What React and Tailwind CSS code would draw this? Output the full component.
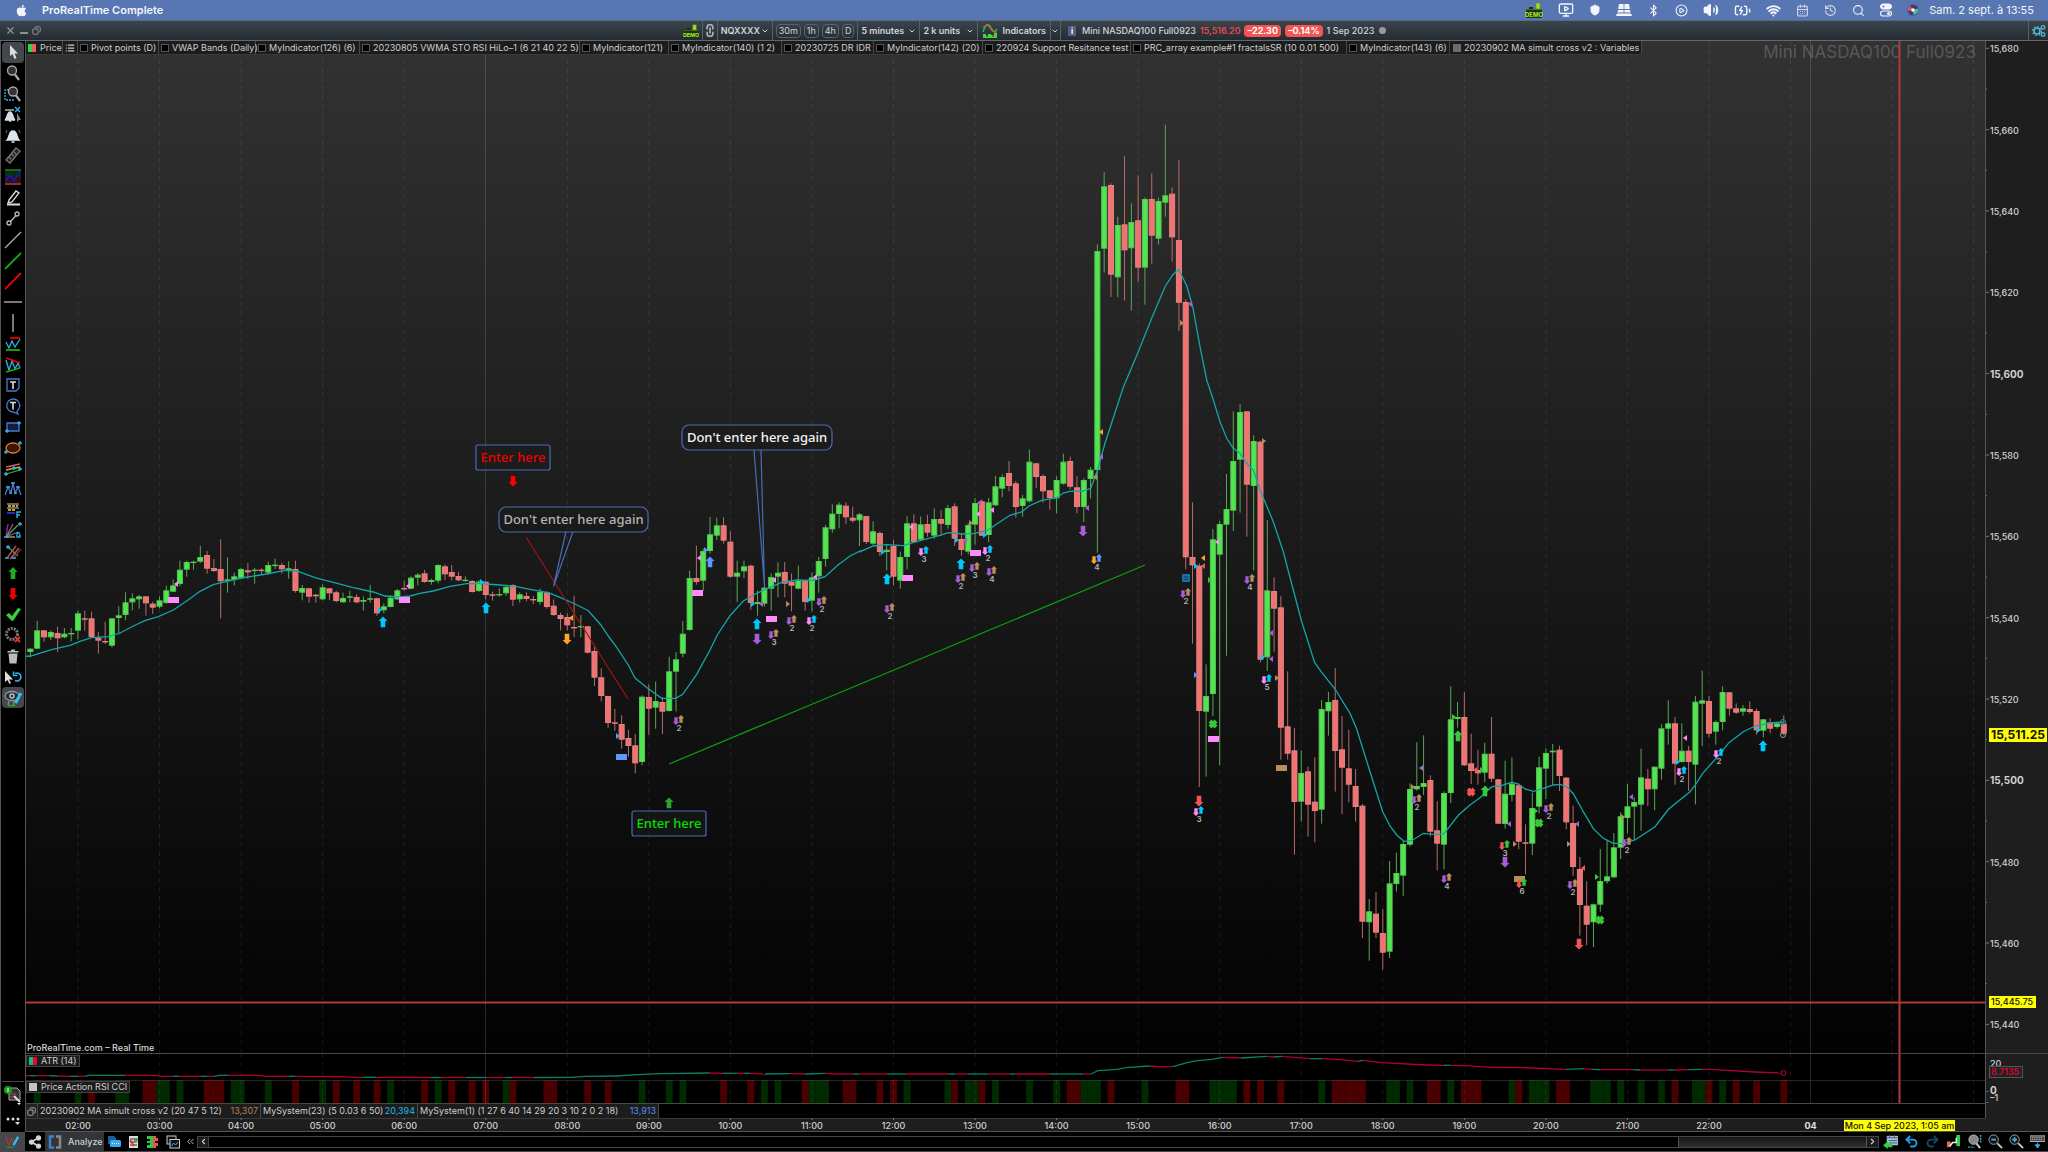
import {
  Bluetooth, CirclePlay, Volume2, BatteryCharging, Wifi, History, Search, MonitorPlay,
  Shield, CalendarDays, ChevronDown, ChevronLeft, ChevronRight, Undo2, Redo2, Share2,
  ChevronsLeft, X, Copy, List, Link2,
} from "lucide-react";
import { FaApple } from "react-icons/fa";

const STEP = 6.796;
const barX = (i) => 30.4 + i * STEP;

// [origin, "dir high open/close close/open low ..."], offsets in thirds of a pixel
const CANDLES = [
  [360, "g865 866 876 892,g783 811 866 866,r811 811 832 845,g811 816 832 840,r800 819 835 876,g804 821 832 835,g804 819 822 844,g752 760 812 838,r752 775 778 812,r755 775 831 833,r816 833 842 881,r785 843 846 852,g775 775 857 862,g739 766 774 823,g697 727 765 780,g700 715 727 751,g705 709 718 746,r708 709 730 767,r725 731 743 762,g709 721 740 745,g677 691 729 732,g658 676 695 696,g602 629 672 679,g602 606 629 650,g602 605 608 629,g557 591 605 609,r573 585 626 641,r597 624 633 636,r538 627 664 775,g592 658 661 698,g638 649 660 676,g624 627 655 658,r609 631 637 658,g624 629 632 671,r625 629 632 643,g605 615 638 644,g596 614 617 627,r608 615 628 641,g604 625 631 656,r602 627 693 698,g675 684 698 721,r684 685 710 728,r702 704 709 728,g673 682 718 721,r684 685 700 720,r692 697 723 727,g698 714 727 728,g692 709 712 727,r703 711 727 730,g709 720 725 752,g675 715 719 728,r713 715 760 767,g730 739 751 760,g706 713 741 742,g687 691 718 720,r662 684 688 692,g649 653 686 688,g639 644 653 676,r630 640 666 668,g656 660 666 674,g613 615 662 670,r613 619 643 660,r615 636 650 661,r635 648 661 664,g649 659 662 665,r660 663 696 698,g660 665 693 696,r664 665 705 718"],
  [400, "r575 583 587 602,g565 582 585 590,g554 561 580 587,r553 555 599 618,g577 583 598 608,r577 588 597 604,r588 597 601 612,g566 576 606 614,r574 577 621 626,r598 617 645 648,r638 645 657 691,r640 651 676 691,r587 681 685 711,g645 678 682 712,r678 679 758 760,r741 753 833 858,r805 832 888 904,r887 888 969 984,r927 967 971 992,r946 972 1019 1046,r989 1014 1038 1070,r1003 1036 1090 1120,g886 890 1086 1096,r853 891 926 1005,g845 903 923 986,r892 906 935 1002,g770 814 933 935,g756 778 815 934,g663 701 761 772,g512 534 690 692,r437 534 546 554,g446 453 542 573,g351 403 453 461,g353 376 407 420,r352 376 422 431,r394 425 530 534,g482 518 530 606,g482 499 514 534,r494 497 609 629,g572 606 612 647,g558 563 611 620,g520 531 566 632,g487 518 530 592,r486 516 551 592,r520 545 557 634,g497 541 566 568,r541 541 606 632,g517 532 602 634,g471 483 529 578,g375 382 477 500,g313 341 388 398,g307 314 342 385,r307 317 352 372,r320 353 362 368,g339 343 361 438,r348 348 426 432,g364 394 431 435,r394 399 456 468,g433 449 456 511,r420 438 530 556"],
  [420, "g395 411 482 506,g289 310 411 448,r283 310 366 369,g290 313 359 362,r284 312 338 350,g265 297 347 356,r270 297 311 347,g255 264 315 326,r250 259 356 378,r340 357 390 407,g310 315 395 403,g234 249 314 374,r238 244 347 348,g234 247 345 366,g168 199 256 258,g163 171 206 232,r123 159 198 214,r183 190 261 293,g225 235 258 290,g89 125 244 248,r129 130 171 204,r163 168 214 248,r210 211 234 269,g169 180 235 280,g101 125 191 194,r110 123 200 208,r168 202 261 280,g175 180 261 306,g141 149 177 235"],
  [100, "g433 453 1110 1358,g216 259 446 518,r250 255 524 591,g350 375 532 592,r168 373 451 602,g310 366 445 632,r226 361 503 547,g292 297 503 614,r220 297 407 491,g293 303 416 434,g74 286 308 350,r262 281 412 485,r180 420 608 693,r598 606 1372 1408,r1207 1371 1396 1631,r1390 1397 1833 2061,g1693 1788 1835 2030,g1287 1318 1782 1848,g1263 1272 1364 1996,g1122 1227 1274 1667,g934 1083 1232 1293,g912 936 1079 1238,r934 934 1154 1310,g1006 1023 1158 1411,r1022 1025 1679 1687,g1260 1471 1672 1713"],
  [540, "r112 153 206 335,r168 202 563 659,r394 559 641 659,r564 631 786 944,g631 699 785 845,r680 694 794 890,r652 785 813 907,g480 507 809 851,g456 486 514 587,r384 480 633 755,r528 628 683 822,r569 685 734 787,r687 738 801 845,r792 797 1145 1194,g1077 1114 1147 1262,r1056 1121 1178 1194,r1107 1179 1238 1289,g963 1030 1235 1254,g938 999 1032 1055,g904 912 1007 1068,g730 747 914 920,g607 738 748 752,g586 729 741 765,r706 720 875 890,r784 871 911 991,g754 759 914 988,g439 538 759 789,g486 531 537 563,r456 531 676 678"],
  [640, "r281 370 393 432,r329 390 400 434,g308 341 398 427,r231 341 416 426,r417 418 551 552,g362 461 552 566,g352 431 465 484,r430 436 605 628,r553 607 611 703,g458 504 611 645,g350 382 500 521,g325 339 386 477,g312 332 337 436,r317 329 408 453,r411 413 547 568,r497 549 681 708,r651 687 795 887,r724 797 854 916,g791 793 847 921,g627 723 794 815,g599 709 724 731,g579 622 712 714,g517 529 623 657,g432 499 534 580,g472 486 500 600,g326 412 494 572,r387 416 448 498,g380 380 448 511,g253 265 386 419,g181 250 266 314,r231 250 371 434,g250 332 366 368,r318 332 366 453,g168 185 374 493,g92 181 191 318,r168 183 281 292,g241 246 275 314,g139 156 246 271,r156 157 206 227,r190 205 218 222,g195 205 215 227,r184 207 216 221,r206 213 271 284,g237 238 272 292,r235 247 266 280,g245 250 261 266,r226 251 281 286"],
];

const candles = CANDLES.flatMap(([origin, rows]) =>
  rows.split(",").map((row) => ({ up: row[0] === "g", y: row.slice(1).split(" ").map((v) => origin + v / 3) }))
);

// moving average, same units: [x origin, y origin, points]
const MA = [
  [0, 360, "76,889 92,888 125,878 155,869 210,856 240,844 275,833 325,830 360,819 400,798 435,782 475,770 520,750 560,723 600,694 640,674 665,668 724,654 800,642 855,631 890,633 945,653 1000,667 1060,683 1120,696 1155,708 1200,711 1230,708 1260,700 1300,693 1350,679 1400,671 1450,670"],
  [480, 400, "18,552 60,555 110,560 150,568 205,578 240,592 285,612 325,632 362,674 385,708 410,742 445,795 465,834 505,866 545,895 587,895 608,883 650,823 690,750 712,705 750,647 790,603 830,580 870,562 905,547 950,540 1000,541 1035,530 1075,494 1110,468 1140,453"],
  [860, 420, "0,395 40,378 80,374 130,377 180,362 240,346 265,338 310,342 345,340 385,330 410,312 450,286 485,276 508,257 545,241 590,233 610,219 630,214 670,213"],
  [1040, 100, "152,1165 172,1112 195,1030 250,862 295,755 335,655 375,560 398,525 416,508 440,557 458,620 480,740 500,840 520,900 540,965 560,1015 580,1045 600,1060 620,1090 640,1110 662,1175 700,1265 730,1355"],
  [1140, 540, "440,75 485,245 524,368 545,397 585,447 630,520 650,567 690,695 728,815 750,858 770,885 792,904 815,902 850,880 890,884 912,881 955,826 990,795 1020,773"],
  [1400, 640, "275,440 300,438 335,427 355,432 375,447 400,454 430,445 460,435 480,433 500,440 520,461 550,515 580,566 610,595 640,610 670,610 705,600 765,560 806,507 870,455 885,436 908,400 950,353 987,308 1030,275 1065,258 1110,249 1150,246"],
];

const maPoints = MA.map(([ox, oy, pts]) =>
  pts.split(" ").map((p) => {
    const [x, y] = p.split(",");
    return `${(ox + x / 3).toFixed(1)},${(oy + y / 3).toFixed(1)}`;
  }).join(" ")
).join(" ");

const C = {
  cyan: "#00c8ff", pink: "#ff8cff", purple: "#a85cd8", tan: "#b98d5e", blue: "#6096ff",
  orange: "#ffa726", red: "#f25555", pure: "#ff0000", green: "#38c83c", forest: "#2ba52f",
};

const ARROWS = [
  ["up", 383, 622, "cyan"], ["up", 486, 608, "cyan"], ["down", 513, 481, "pure"], ["down", 567, 639, "orange"],
  ["up", 710, 562, "blue"], ["up", 757, 624, "cyan"], ["down", 757, 639, "purple"], ["up", 669, 803, "forest"],
  ["up", 887, 579, "cyan"], ["up", 961, 564, "cyan"], ["down", 1083, 531, "purple"], ["down", 1199, 801, "red"],
  ["up", 1458, 736, "green"], ["up", 1485, 791, "green"], ["down", 1505, 862, "purple"], ["down", 1579, 944, "red"],
  ["up", 1763, 746, "cyan"],
];

const BLOCKS = [
  [173, 600, "pink"], [404, 600, "pink"], [621, 757, "blue"], [697, 593, "pink"], [771, 619, "pink"],
  [907, 578, "pink"], [975, 553, "pink"], [1213, 739, "pink"], [1281, 768, "tan"], [1519, 879, "tan"],
];

const PAIRS = [
  [679, 720, "purple", "tan", 2], [774, 634, "purple", "tan", 3], [792, 620, "purple", "tan", 2], [812, 620, "pink", "cyan", 2],
  [822, 601, "purple", "tan", 2], [890, 608, "purple", "tan", 2], [924, 551, "pink", "cyan", 3], [961, 578, "purple", "tan", 2],
  [975, 567, "purple", "tan", 3], [988, 550, "pink", "cyan", 2], [992, 571, "purple", "tan", 4], [1097, 559, "orange", "blue", 4],
  [1186, 593, "purple", "tan", 2], [1250, 579, "purple", "tan", 4], [1199, 811, "pink", "cyan", 3], [1267, 679, "pink", "cyan", 5],
  [1417, 799, "purple", "tan", 2], [1447, 878, "purple", "tan", 4], [1505, 845, "red", "green", 3], [1522, 883, "red", "green", 6],
  [1549, 808, "purple", "tan", 2], [1573, 884, "purple", "tan", 2], [1627, 842, "purple", "tan", 2], [1682, 771, "pink", "cyan", 2],
  [1719, 753, "pink", "cyan", 2],
];

const CROSSES = [[1213, 724, "green"], [1471, 792, "red"], [1539, 823, "green"], [1600, 920, "green"]];

const FLAGS = [
  ["l", 176, 584, "pink"], ["r", 380, 610, "cyan"], ["l", 408, 586, "pink"], ["r", 482, 582, "cyan"], ["l", 571, 618, "orange"],
  ["r", 618, 736, "blue"], ["l", 699, 558, "pink"], ["r", 706, 550, "blue"], ["r", 753, 604, "cyan"], ["l", 761, 604, "purple"],
  ["l", 774, 580, "pink"], ["r", 788, 604, "tan"], ["r", 809, 600, "cyan"], ["l", 815, 577, "pink"], ["r", 883, 552, "cyan"],
  ["l", 911, 527, "pink"], ["l", 965, 540, "purple"], ["r", 957, 540, "cyan"], ["r", 971, 523, "tan"], ["l", 979, 503, "purple"],
  ["l", 978, 514, "pink"], ["l", 992, 510, "pink"], ["r", 985, 535, "cyan"], ["l", 1087, 508, "purple"], ["l", 1101, 432, "orange"],
  ["l", 1101, 457, "purple"], ["l", 1095, 477, "tan"], ["l", 1190, 304, "purple"], ["r", 1182, 323, "tan"], ["r", 1264, 441, "tan"],
  ["l", 1203, 558, "orange"], ["r", 1196, 566, "cyan"], ["l", 1203, 566, "red"], ["r", 1210, 580, "green"], ["l", 1217, 542, "pink"],
  ["l", 1271, 633, "purple"], ["r", 1263, 657, "cyan"], ["l", 1271, 659, "purple"], ["r", 1277, 678, "tan"], ["r", 1196, 675, "blue"],
  ["l", 1421, 768, "purple"], ["r", 1413, 787, "tan"], ["r", 1454, 717, "green"], ["l", 1475, 770, "red"], ["r", 1482, 770, "green"],
  ["l", 1509, 824, "purple"], ["r", 1515, 844, "tan"], ["r", 1536, 811, "green"], ["l", 1577, 824, "purple"], ["r", 1569, 844, "tan"],
  ["l", 1583, 868, "red"], ["r", 1597, 877, "green"], ["l", 1631, 797, "purple"], ["r", 1623, 817, "tan"], ["l", 1685, 738, "pink"],
  ["r", 1678, 762, "cyan"], ["r", 1759, 730, "cyan"],
];

// RSI CCI states by bar index
const RSI_UP = [1, 7, 13, 14, 19, 20, 22, 30, 31, 35, 43, 53, 60, 70, 90, 94, 96, 108, 110, 115, 116, 117, 129, 135, 138, 139, 142, 147, 151, 155, 156, 157, 164, 174, 175, 176, 177, 190, 200, 201, 203, 209, 218, 221, 222, 223, 230, 231, 232, 234, 237, 240, 245, 246, 249];
const RSI_DOWN = [9, 17, 18, 26, 27, 28, 39, 45, 48, 51, 58, 62, 65, 67, 71, 76, 77, 82, 85, 102, 106, 114, 120, 121, 125, 127, 136, 140, 153, 154, 159, 169, 170, 179, 181, 184, 192, 193, 194, 195, 196, 206, 207, 211, 212, 213, 219, 225, 226, 242, 247, 251, 254, 258];

// ATR: [x, y, colour of the segment that ends here]
const ATR = [
  [26, 1075.7], [30, 1075.7, "r"], [36, 1075.7, "g"], [49, 1075.7, "r"], [57, 1076, "g"], [70, 1076.3, "r"], [78, 1076.3, "g"], [85, 1076.3, "r"],
  [89, 1075.3, "g"], [125, 1075.3, "g"], [152, 1075.3, "r"], [163, 1076.3, "r"], [173, 1076.3, "r"], [179, 1076.3, "g"], [201, 1076.3, "r"],
  [207, 1076.3, "g"], [214, 1076.3, "r"], [219, 1075.3, "g"], [228, 1075.3, "g"], [257, 1075.3, "r"], [268, 1076.3, "r"], [289, 1076.3, "r"],
  [295, 1076.3, "g"], [344, 1076.7, "r"], [353, 1077.3, "r"], [363, 1077.3, "r"], [376, 1077.3, "g"], [431, 1077.5, "r"], [441, 1077.5, "g"],
  [466, 1077.5, "r"], [486, 1077.5, "g"], [505, 1077.5, "r"], [512, 1077.5, "g"], [534, 1077.5, "r"], [571, 1077.3, "g"], [585, 1076.3, "g"],
  [616, 1076, "g"], [638, 1074.7, "g"], [661, 1073.7, "g"], [709, 1073, "g"], [723, 1073.3, "r"], [737, 1073.3, "g"], [744, 1073.3, "r"],
  [750, 1073.3, "g"], [765, 1074, "r"], [790, 1073.7, "g"], [805, 1074, "r"], [825, 1073.3, "g"], [837, 1074, "r"], [853, 1074, "r"],
  [859, 1074, "g"], [887, 1074, "r"], [906, 1074, "g"], [948, 1074, "r"], [955, 1074, "g"], [968, 1074, "r"], [988, 1074, "g"], [1010, 1074, "r"],
  [1015, 1074, "g"], [1050, 1074, "r"], [1064, 1074, "g"], [1083, 1074, "g"], [1091, 1074, "r"], [1098, 1070.7, "g"], [1117, 1069.3, "g"],
  [1126, 1067.7, "g"], [1150, 1066, "g"], [1158, 1066.7, "r"], [1173, 1066.7, "r"], [1187, 1062.7, "g"], [1197, 1060.7, "g"], [1210, 1059.7, "g"],
  [1223, 1057.3, "g"], [1241, 1058, "r"], [1267, 1056.3, "g"], [1274, 1057, "r"], [1282, 1056.3, "g"], [1310, 1058.7, "r"], [1322, 1058.7, "g"],
  [1336, 1059.3, "r"], [1358, 1061.3, "r"], [1363, 1060.3, "g"], [1382, 1062.7, "r"], [1426, 1065, "r"], [1444, 1065.3, "r"], [1450, 1065.3, "g"],
  [1465, 1065.7, "r"], [1492, 1067.3, "r"], [1522, 1067.7, "r"], [1566, 1069.3, "r"], [1584, 1068.7, "g"], [1592, 1069.3, "r"], [1600, 1069.7, "g"],
  [1633, 1069.7, "r"], [1640, 1070, "g"], [1668, 1070, "r"], [1674, 1070, "g"], [1688, 1069.7, "r"], [1702, 1069.3, "g"], [1711, 1069.3, "r"],
  [1755, 1072, "r"], [1781, 1073, "r"],
];

const HOURS = Array.from({ length: 21 }, (_, n) => ({ x: 78 + n * 81.55, label: `${String(n + 2).padStart(2, "0")}:00` }));
const DASHED = [...HOURS.filter((h) => h.label !== "07:00").map((h) => h.x), 1790.5, 1892, 1973.5];

function Guides({ top, height }) {
  return (
    <g>
      {DASHED.map((x) => (
        <line key={x} x1={x} x2={x} y1={top} y2={top + height} stroke="#ffffff" strokeOpacity="0.08" strokeDasharray="5 4" />
      ))}
      {[485.5, 1810.5].map((x) => (
        <line key={x} x1={x} x2={x} y1={top} y2={top + height} stroke="#ffffff" strokeOpacity="0.14" />
      ))}
      <line x1="1899.5" x2="1899.5" y1={top} y2={top + height} stroke="#b03a3a" strokeWidth="2" />
    </g>
  );
}

const ARROW_UP = "M0-5.5L4.500-1H2.300V5.200H-2.300V-1H-4.500Z";
const ARROW_DOWN = "M0 5.500L4.500 1H2.300V-5.200H-2.300V1H-4.500Z";

function Arrow({ dir, x, y, color, scale = 1 }) {
  return <path d={dir === "up" ? ARROW_UP : ARROW_DOWN} fill={C[color]} transform={`translate(${x} ${y}) scale(${scale})`} />;
}

function Note({ x, y, width, radius, color, children }) {
  return (
    <g>
      <rect x={x} y={y} width={width} height="25" rx={radius} fill="#1a1a1a" fillOpacity="0.6" stroke="#4a6cb4" strokeWidth="1.2" />
      <text x={x + width / 2} y={y + 17} textAnchor="middle" fill={color} className="font-['Noto_Sans','Open_Sans',sans-serif] text-[13px] font-medium">{children}</text>
    </g>
  );
}

function PriceChart() {
  const prices = Array.from({ length: 13 }, (_, n) => 15680 - n * 20);
  return (
    <svg viewBox="26 41 2022 1012" preserveAspectRatio="none" className="block h-full w-full">
      <defs>
        <linearGradient id="sky" x1="0" y1="0" x2="0" y2="1">
          <stop offset="0" stopColor="#323232" />
          <stop offset="1" stopColor="#020202" />
        </linearGradient>
      </defs>
      <rect x="26" y="41" width="1960" height="1012" fill="url(#sky)" />
      <text x="1976" y="58" textAnchor="end" fill="#585858" className="text-[17px]">Mini NASDAQ100 Full0923</text>
      <Guides top={41} height={1012} />

      {candles.map(({ up, y: [high, top, bottom, low] }, i) => (
        <g key={i}>
          <line x1={barX(i)} x2={barX(i)} y1={high} y2={low} stroke={up ? "#58a852" : "#b86a6a"} />
          <rect x={barX(i) - 2.5} y={top + 0.5} width="5" height={Math.max(0.4, bottom - top - 1)} fill={up ? "#50e650" : "#f27272"} stroke={up ? "#5ac455" : "#e08480"} />
        </g>
      ))}
      <polyline points={maPoints} fill="none" stroke="#12a6a8" strokeWidth="1.3" />
      <circle cx="1783" cy="722" r="2.5" fill="none" stroke="#12a6a8" />
      <circle cx="1783" cy="735" r="2.5" fill="none" stroke="#999" />

      <line x1="526" y1="537" x2="628" y2="699" stroke="#a01414" strokeWidth="1.2" />
      <line x1="669" y1="764" x2="1145" y2="565" stroke="#0c9c0c" strokeWidth="1.3" />

      {FLAGS.map(([dir, x, y, color], i) => (
        <path key={i} d={dir === "l" ? "M-2 0L2-3V3Z" : "M2 0L-2-3V3Z"} fill={C[color]} transform={`translate(${x} ${y})`} />
      ))}
      {BLOCKS.map(([x, y, color], i) => (
        <rect key={i} x={x - 5} y={y - 3} width="11" height="6" fill={C[color]} />
      ))}
      {CROSSES.map(([x, y, color], i) => (
        <path key={i} d="M-3-3L3 3M3-3L-3 3" stroke={C[color]} strokeWidth="4" transform={`translate(${x} ${y})`} />
      ))}
      {ARROWS.map(([dir, x, y, color], i) => <Arrow key={i} dir={dir} x={x} y={y} color={color} />)}
      {PAIRS.map(([x, y, left, right, count], i) => (
        <g key={i}>
          <Arrow dir="down" x={x - 3} y={y + 1} color={left} scale={0.72} />
          <Arrow dir="up" x={x + 2} y={y - 1} color={right} scale={0.72} />
          <text x={x} y={y + 11} textAnchor="middle" fill="#b4b4b4" className="text-[8px] font-semibold">{count}</text>
        </g>
      ))}
      <rect x="1182" y="574" width="8" height="8" rx="1" fill="#1d6fa8" />
      <path d="M1183.5 577h5M1183.5 579.5h5" stroke="#0b3d66" />

      <path d="M566 531.5L553.5 586.5L573 531.5" fill="none" stroke="#4a6cb4" strokeWidth="1.2" />
      <path d="M754 450L764.5 586.5L761 450" fill="none" stroke="#4a6cb4" strokeWidth="1.2" />
      <Note x={476} y={445} width={74} radius="2" color="#f00000">Enter here</Note>
      <Note x={499} y={507} width={149} radius="7" color="#b4b4b4">Don't enter here again</Note>
      <Note x={682} y={425} width={150} radius="7" color="#f4f4f4">Don't enter here again</Note>
      <Note x={632} y={811} width={74} radius="2" color="#00e000">Enter here</Note>

      <rect x="26" y="1001.5" width="1960" height="2" fill="#b03a3a" />
      <text x="27" y="1051" fill="#d8d8d8" className="text-[9px] font-medium">ProRealTime.com – Real Time</text>

      <rect x="1986" y="41" width="62" height="1012" fill="#1e1e1e" />
      <line x1="1985.5" x2="1985.5" y1="41" y2="1053" stroke="#555" />
      {prices.map((p) => {
        const y = 48.3 + (15680 - p) * 4.067;
        return (
          <g key={p}>
            <path d={`M1986 ${y}h3M1986 ${y + 40.7}h1`} stroke="#777" />
            <text x="1990" y={y + 4} fill="#d0d0d0" className={p % 100 ? "text-[9px] font-medium" : "text-[10px] font-bold"}>{p.toLocaleString("en-US")}</text>
          </g>
        );
      })}
      <rect x="1989" y="728" width="58" height="14" fill="#ffff00" />
      <text x="2018" y="739" textAnchor="middle" fill="#111" className="text-[12px] font-bold">15,511.25</text>
      <rect x="1989" y="996" width="47" height="12" fill="#ffff00" />
      <text x="1991" y="1005" fill="#111" className="text-[9px] font-medium">15,445.75</text>
    </svg>
  );
}

function AtrPanel() {
  return (
    <svg viewBox="26 1053 2022 27" preserveAspectRatio="none" className="block h-full w-full">
      <rect x="26" y="1053" width="1960" height="27" fill="#000" />
      <Guides top={1053} height={27} />
      {ATR.slice(1).map(([x, y, c], i) => (
        <line key={i} x1={ATR[i][0]} y1={ATR[i][1]} x2={x} y2={y} stroke={c === "g" ? "#0a8262" : "#b0002c"} strokeWidth="1.3" />
      ))}
      <circle cx="1783.5" cy="1073" r="2.5" fill="none" stroke="#d00030" />
      <rect x="1986" y="1053" width="62" height="27" fill="#1e1e1e" />
      <path d="M26 1053.5H2048" stroke="#484848" />
      <path d="M1985.5 1053V1080" stroke="#555" />
      <text x="1990" y="1067" fill="#d0d0d0" className="text-[9px] font-medium">20</text>
      <rect x="1989.5" y="1066.5" width="33" height="11" fill="#222" stroke="#555" />
      <text x="1991" y="1075" fill="#f00030" className="text-[9px] font-medium">8.7135</text>
    </svg>
  );
}

function RsiPanel() {
  return (
    <svg viewBox="26 1080 2022 24" preserveAspectRatio="none" className="block h-full w-full">
      <rect x="26" y="1080" width="1960" height="24" fill="#000" />
      {RSI_UP.map((i) => <rect key={i} x={barX(i) - 3.4} y="1080" width="6.9" height="23" fill="#002a00" />)}
      {RSI_DOWN.map((i) => <rect key={i} x={barX(i) - 3.4} y="1080" width="6.9" height="23" fill="#4a0000" />)}
      <Guides top={1080} height={24} />
      <rect x="1986" y="1080" width="62" height="24" fill="#1e1e1e" />
      <path d="M26 1080H1986M26 1103.5H1986" stroke="#484848" />
      <path d="M1985.5 1080V1104M1986 1091.5h3M1986 1102.5h3" stroke="#555" />
      <text x="1990" y="1094" fill="#d0d0d0" className="text-[10px] font-bold">0</text>
      <text x="1990" y="1101" fill="#d0d0d0" className="text-[9px] font-medium">–1</text>
    </svg>
  );
}

function TimeAxis() {
  return (
    <svg viewBox="26 1118 2022 14" preserveAspectRatio="none" className="block h-full w-full">
      <rect x="26" y="1118" width="2022" height="14" fill="#1e1e1e" />
      <path d="M26 1118H1986M26 1131.5H2048" stroke="#555" />
      {HOURS.map(({ x, label }) => (
        <g key={label}>
          <path d={`M${x} 1118v2`} stroke="#777" />
          <text x={x} y="1129" textAnchor="middle" fill="#d0d0d0" className="text-[9px] font-medium">{label}</text>
        </g>
      ))}
      <text x="1810.5" y="1129" textAnchor="middle" fill="#e0e0e0" className="text-[9px] font-bold">04</text>
      <rect x="1844" y="1120" width="111" height="11" fill="#ffff00" />
      <text x="1899.5" y="1129" textAnchor="middle" fill="#111" className="text-[9px] font-medium">Mon 4 Sep 2023, 1:05 am</text>
    </svg>
  );
}

function DemoIcon({ className }) {
  return (
    <svg viewBox="0 0 18 18" className={className}>
      <rect x="1" y="8" width="16" height="9" fill="#1f3310" />
      <path d="M4 8V6h4v2z" fill="#222" />
      <path d="M11 2h4v6h-4z" fill="#9be22d" stroke="#5c8a1b" strokeWidth="0.6" />
      <path d="M1 8.500h16" stroke="#4c6b1d" />
      <text x="9" y="15.5" textAnchor="middle" fill="#a6f02d" className="text-[6px] font-bold">DEMO</text>
    </svg>
  );
}

function MenuBar() {
  return (
    <header className="flex h-5 shrink-0 items-center bg-[#5876b2] text-[#f2f5fb]">
      <FaApple className="ml-[15px] h-[13px] w-[13px]" />
      <h1 className="ml-[14px] text-[11px] font-semibold">ProRealTime Complete</h1>
      <div className="ml-auto flex items-center gap-[10px] pr-[14px]">
        <div className="flex items-center gap-[15px]">
          <DemoIcon className="h-[18px] w-[18px]" />
          <MonitorPlay className="h-4 w-4" />
          <Shield className="h-3 w-3" fill="currentColor" />
          <svg viewBox="0 0 16 12" className="h-3 w-4" fill="currentColor">
            <path d="M3 0h4.600v5H2.200zM8.400 0H13l.8 5H8.400zM2 6h5.600v2.500H1.500zM8.400 6H14l.5 2.500H8.400zM1 9.500h14L16 12H0z" />
          </svg>
          <Bluetooth className="h-[13px] w-[13px]" />
          <CirclePlay className="h-[13px] w-[13px]" />
          <Volume2 className="h-4 w-4" fill="currentColor" />
          <BatteryCharging className="h-[17px] w-[17px]" />
          <Wifi className="h-[15px] w-[15px]" strokeWidth={3} />
          <CalendarDays className="h-[13px] w-[13px] opacity-80" />
          <History className="h-[13px] w-[13px] opacity-80" />
          <Search className="h-[13px] w-[13px]" />
          <svg viewBox="0 0 12 14" className="h-[14px] w-3" fill="none" stroke="currentColor">
            <rect x="0.500" y="1" width="11" height="5" rx="2.500" fill="currentColor" />
            <rect x="0.500" y="8" width="11" height="5" rx="2.500" strokeWidth="1.200" />
            <circle cx="3.500" cy="3.500" r="1" fill="#5876b2" stroke="none" />
            <circle cx="8.500" cy="10.500" r="1.500" fill="currentColor" stroke="none" />
          </svg>
          <svg viewBox="0 0 12 12" className="h-3 w-3">
            <circle cx="6" cy="6" r="5.500" fill="#4a3b6b" />
            <path d="M6 6L3 1.800A5.200 5.200 0 0 0 1 7z" fill="#e2507c" />
            <path d="M6 6l5-1.500A5.200 5.200 0 0 1 6.500 11z" fill="#3cc5a6" />
            <circle cx="6" cy="6" r="1.800" fill="#fff" />
          </svg>
        </div>
        <time className="text-[11px]">Sam. 2 sept. à 13:55</time>
      </div>
    </header>
  );
}

function Dropdown({ label, value, className }) {
  return (
    <div className={`flex h-full items-center border-r border-[#556068] px-[3px] ${className}`}>
      <select aria-label={label} className="appearance-none bg-transparent text-[9px] font-semibold outline-none">
        <option>{value}</option>
      </select>
      <ChevronDown className="ml-auto h-2 w-2 shrink-0" strokeWidth={3} />
    </div>
  );
}

function Toolbar() {
  return (
    <div className="grid h-[21px] shrink-0 grid-cols-[1fr_auto_1fr] items-center border-t border-b border-[#5a6a76] bg-linear-to-b from-[#3c454d] to-[#242b31] text-[9px] text-[#d0d4d7]">
      <div className="flex items-center gap-1 pl-[5px] text-[#8f979d]">
        <button aria-label="Close"><X className="h-[11px] w-[11px]" strokeWidth={2.500} /></button>
        <button aria-label="Minimize" className="mt-[5px] h-[2px] w-2 bg-[#8a9299]" />
        <button aria-label="Restore"><Copy className="h-[9px] w-[9px] -scale-x-100" strokeWidth={2.500} /></button>
      </div>
      <div className="ml-[21px] flex h-full items-center">
        <div className="flex h-full w-5 items-center border-r border-[#556068]"><DemoIcon className="h-4 w-4" /></div>
        <button aria-label="Link" className="flex h-full w-[15px] items-center justify-center border-r border-[#556068] text-[#a8adb0]"><Link2 className="h-[15px] w-[15px] rotate-90" strokeWidth={3} /></button>
        <Dropdown label="Instrument" value="NQXXXX" className="w-[55px]" />
        <div className="flex h-full items-center gap-[3px] border-r border-[#556068] px-[3px]">
          {["30m", "1h", "4h", "D"].map((t) => (
            <button key={t} className="h-[14px] rounded-sm border border-[#59636b] px-[2px] leading-3">{t}</button>
          ))}
        </div>
        <Dropdown label="Timeframe" value="5 minutes" className="w-[62px]" />
        <Dropdown label="Units" value="2 k units" className="w-[58px]" />
        <button className="flex h-full items-center gap-1 border-r border-[#556068] px-1 font-semibold">
          <svg viewBox="0 0 16 16" className="h-4 w-4">
            <path d="M1 9C4 0 6 0 9 5s4 4 6 1" fill="none" stroke="#28b43c" strokeWidth="1.600" />
            <path d="M1 5c3-4 6-3 8 1s4 3 6 3" fill="none" stroke="#e05050" strokeWidth="1.200" />
            <path d="M1 15v-4h3v2h2v-2h3v1h3v-2h3v5z" fill="#2ee03c" />
            <path d="M4 13h2M10 13h2" stroke="#e02020" strokeWidth="1.500" />
          </svg>
          Indicators
        </button>
        <button aria-label="Indicator list" className="flex h-full w-[10px] items-center justify-center border-r border-[#556068]"><ChevronDown className="h-2 w-2" strokeWidth={3} /></button>
        <span className="ml-[7px] flex h-[10px] w-2 items-center justify-center bg-[#555d80] text-[8px] font-bold text-white">i</span>
        <span className="ml-[6px] font-medium">Mini NASDAQ100 Full0923</span>
        <span className="ml-1 font-medium text-[#ff4b4b]">15,516.20</span>
        <span className="ml-1 rounded-sm bg-[#f55454] px-[3px] leading-3 font-bold text-white">–22.30</span>
        <span className="ml-1 rounded-sm bg-[#f55454] px-[3px] leading-3 font-bold text-white">–0.14%</span>
        <span className="ml-1 font-medium">1 Sep 2023</span>
        <span className="ml-[5px] h-[7px] w-[7px] rounded-full bg-[#999]" />
      </div>
      <div className="flex h-full justify-end">
        <button aria-label="Settings" className="flex h-full w-5 items-center justify-center border-l border-[#556068]">
          <svg viewBox="0 0 14 14" className="h-[14px] w-[14px]" fill="none" stroke="#58b8dc">
            <circle cx="5" cy="7" r="3" strokeWidth="1.600" />
            <circle cx="5" cy="7" r="4.500" strokeWidth="1.200" strokeDasharray="1.500 2" />
            <circle cx="11" cy="3.500" r="1.800" strokeWidth="1.300" />
            <circle cx="11" cy="10.500" r="1.800" strokeWidth="1.300" />
          </svg>
        </button>
      </div>
    </div>
  );
}

const TOOLS = [
  ["Pointer", <path d="M6 2v11l2.500-2 2 5 2-1-2-4.500H14z" fill="#ddd" />],
  ["Zoom", <g stroke="#aaa"><circle cx="8" cy="6.500" r="4.500" fill="#333" /><path d="M11 10.500l4 5.500" strokeWidth="2.200" /></g>],
  ["Zoom area", <g stroke="#aaa"><path d="M5 5H1v10h9" fill="none" stroke="#2ab4e6" strokeDasharray="2 1" /><circle cx="9" cy="6.500" r="4.500" fill="#333" /><path d="M12 10.500l4 5.500" strokeWidth="2.200" /></g>],
  ["Price alert", <g><path d="M1 14c2-1 2-8 5-8s3 7 5 8zM5 15h2" fill="#d5dde8" stroke="#d5dde8" /><path d="M1 4h9" stroke="#ccc" /><path d="M11 1l5 5M16 1l-5 5" stroke="#2ab4e6" /><path d="M13 7v9l2-2 2 0z" fill="#889" /></g>],
  ["Alert", <g><path d="M3 13c2.500-2 1.500-9 6-9s3.500 7 6 9zM7.500 15h3" fill="#e0e6f0" stroke="#e0e6f0" /><path d="M2 6l1-3M16 6l-1-3" stroke="#555" /></g>],
  ["Ruler", <g fill="none" stroke="#777"><path d="M2 13L12 1l4 3L6 16z" fill="#222" /><path d="M5 10l2 2M7 7l3 2M10 5l2 2" /></g>],
  ["Zones", <g><path d="M1 3h16v6H1z" fill="#06300a" /><path d="M1 9h16v6H1z" fill="#35100c" /><path d="M1 2h16" stroke="#2a9c2a" /><path d="M1 16h16" stroke="#d25050" /><path d="M2 13l4-6 4 6 6-10" fill="none" stroke="#1414f0" strokeWidth="1.400" /></g>],
  ["Draw", <g fill="none" stroke="#ddd"><path d="M5 11l7-9 3 2-7 9-4 1z" /><path d="M3 15.500h13" strokeWidth="2" /></g>],
  ["Segment", <g fill="none" stroke="#bbb"><circle cx="5" cy="13" r="2" /><circle cx="13" cy="4" r="2" /><path d="M6.500 11.500L12 5.500" /></g>],
  ["Line", <path d="M1 17L17 1" stroke="#aaa" />],
  ["Green line", <path d="M1 17L17 1" stroke="#18a818" strokeWidth="1.800" />],
  ["Red line", <path d="M1 17L17 1" stroke="#f00000" strokeWidth="1.800" />],
  ["Horizontal line", <path d="M0 9h18" stroke="#bbb" />],
  ["Vertical line", <path d="M9 0v18" stroke="#bbb" />],
  ["Breakout", <g fill="none"><path d="M2 7l3 6 3-7 3 6 5-8" stroke="#2ab4e6" /><path d="M6 3h10" stroke="#f00000" strokeWidth="1.800" /><path d="M2 15h14" stroke="#10b010" strokeWidth="1.800" /></g>],
  ["Channel", <g fill="none"><path d="M2 4l3 10 3-9 3 8 3-6 2 5" stroke="#2ab4e6" /><path d="M2 2l14 5" stroke="#f00000" strokeWidth="1.800" /><path d="M2 16l14-4" stroke="#10b010" strokeWidth="1.800" /></g>],
  ["Text note", <g><path d="M3 3h12v9l-3 3H3z" fill="none" stroke="#4a78d0" strokeWidth="1.300" /><path d="M6 6h6M9 6v7" stroke="#ddd" strokeWidth="1.600" /></g>],
  ["Callout", <g><path d="M13 15l1 2-5-2a6.500 6.500 0 1 1 5-2z" fill="none" stroke="#4a78d0" strokeWidth="1.300" /><path d="M6 5.500h6M9 5.500v7" stroke="#ddd" strokeWidth="1.600" /></g>],
  ["Rectangle", <g><path d="M3 5h12v8H3z" fill="#131c38" stroke="#4a78d0" /><path d="M1 13h4M3 11v4M13 5h4M15 3v4" stroke="#2ab4e6" /></g>],
  ["Ellipse", <g><ellipse cx="9" cy="9" rx="7" ry="5" fill="#3a1606" stroke="#e07830" /><path d="M0 13h4M2 11v4M14 4h4M16 2v4" stroke="#2ab4e6" /></g>],
  ["Regression", <g><path d="M2 7l14-3" stroke="#d06060" /><path d="M2 10l14-3" stroke="#e0a040" /><path d="M2 14l14-4" stroke="#30b030" /><path d="M0 14h4M2 12v4M8 8h4M10 6v4M14 9h4M16 7v4" stroke="#2ab4e6" /></g>],
  ["Pattern", <g><path d="M1 15L4 7l3 6 2-10 2 10 3-6 3 8" fill="none" stroke="#4a78d0" strokeWidth="1.300" /><path d="M2 7h4M7 3h4M12 7h4M5 13h3M10 13h3" stroke="#2ab4e6" /></g>],
  ["Fibonacci", <g><path d="M3 3h12M3 7h12" stroke="#888" /><path d="M4 5h10M4 9h8" stroke="#d0a020" strokeWidth="2" strokeDasharray="3 1" /><path d="M3 12h8" stroke="#2030d0" strokeWidth="2" /><path d="M13 17v-6h4M13 14h3" fill="none" stroke="#2ab4e6" strokeWidth="1.400" /></g>],
  ["Gann", <g><path d="M2 15L4 2" stroke="#8030c0" /><path d="M2 15L9 2" stroke="#c05070" /><path d="M2 15L14 3" stroke="#50b050" /><path d="M2 15l12-5" stroke="#5070d0" /><path d="M2 15h9" stroke="#e0a040" /><path d="M16 11h-3v4h3v-2h-1M0 15h4M14 2h4M16 0v4" fill="none" stroke="#2ab4e6" /></g>],
  ["Pitchfork", <g><path d="M4 4l10 9" stroke="#30b030" /><path d="M3 15L12 3M6 16l9-11" stroke="#c05060" /><path d="M8 16l9-10" stroke="#803030" /><path d="M2 4h4M4 2v4M1 15h4M8 15h4" stroke="#2ab4e6" /></g>],
  ["Buy arrow", <path d="M9 3l4.500 5h-2.200v7H6.700V8H4.500z" fill="#18b018" />],
  ["Sell arrow", <path d="M9 15l4.500-5h-2.200V3H6.700v7H4.500z" fill="#f00000" />],
  ["Validate", <path d="M2 10l3-2 3 3 6-8 3 1-8 12H8z" fill="#38d038" />],
  ["Wheel off", <g fill="none"><circle cx="8" cy="8" r="5.500" stroke="#777" strokeWidth="3" strokeDasharray="2 1" /><path d="M11 11l5 5M16 11l-5 5" stroke="#e03030" strokeWidth="2" /></g>],
  ["Delete", <path d="M3.500 4h11v1.500h-11zM7 2.500h4V4H7zM4.500 6.500h9l-1 10H5.500z" fill="#b8bcc0" />],
  ["Undo selection", <g><path d="M1 3v11l2.500-2 2 4 1.500-1-2-3.500H9z" fill="#ddd" /><path d="M11 5.500a4 4 0 1 1 0 7M9.500 3.500v4h4" fill="none" stroke="#2ab4e6" strokeWidth="1.600" /></g>],
  ["Show drawings", <g><ellipse cx="8" cy="7" rx="7" ry="4.500" fill="#2a2e32" stroke="#8a98a4" strokeWidth="1.300" /><circle cx="8" cy="7" r="2" fill="none" stroke="#b0bcc8" strokeWidth="1.500" /><path d="M5 12l-1 4M10 12v4" stroke="#888" /><path d="M4 16.500h7" stroke="#20b020" /><path d="M11.500 14L17 4" stroke="#30c0f0" strokeWidth="3" /></g>],
];

function Sidebar() {
  return (
    <aside className="flex w-[26px] shrink-0 flex-col border-r border-l border-[#555] bg-black px-px">
      <div className="grid h-[667px] auto-rows-fr pt-px">
        {TOOLS.map(([name, icon], i) => (
          <button key={name} aria-label={name} className={`flex items-center justify-center rounded-sm ${i === 0 || i === TOOLS.length - 1 ? "bg-[#44484c]" : ""}`}>
            <svg viewBox="0 0 18 18" className="h-[18px] w-[18px]" strokeWidth="1.300">{icon}</svg>
          </button>
        ))}
      </div>
      <div className="mt-auto flex h-[51px] flex-col items-center justify-between border-t border-[#484848] pt-[3px] pb-[6px]">
        <button aria-label="Reports">
          <svg viewBox="0 0 18 20" className="h-5 w-[18px]">
            <path d="M5 3h8l3 3v9H5z" fill="#333" stroke="#aaa" />
            <path d="M6 9h6M6 12h4" stroke="#c04040" />
            <path d="M10 11l6 6" stroke="#ddd" strokeWidth="2" />
            <circle cx="4" cy="5" r="4" fill="#18a018" />
            <path d="M4 3v4" stroke="#fff" />
            <path d="M13 18h4l-2 2z" fill="#eee" />
          </svg>
        </button>
        <button aria-label="More tools">
          <svg viewBox="0 0 16 10" className="h-[10px] w-4" fill="#ddd">
            <circle cx="3" cy="3" r="1.500" /><circle cx="8" cy="3" r="1.500" /><circle cx="13" cy="3" r="1.500" />
            <path d="M10 6h5l-2.500 3z" />
          </svg>
        </button>
      </div>
    </aside>
  );
}

const INDICATORS = [
  ["Pivot points (D)", "w-[81px]"], ["VWAP Bands (Daily)", "w-[97px]"], ["MyIndicator(126) (6)", "w-[104px]"],
  ["20230805 VWMA STO RSI HiLo–1 (6 21 40 22 5)", "w-[220px]"], ["MyIndicator(121)", "w-[89px]"], ["MyIndicator(140) (1 2)", "w-[113px]"],
  ["20230725 DR IDR", "w-[92px]"], ["MyIndicator(142) (20)", "w-[109px]"], ["220924 Support Resitance test", "w-[148px]"],
  ["PRC_array example#1 fractalsSR (10 0.01 500)", "w-[216px]"], ["MyIndicator(143) (6)", "w-[103px]"],
];

function IndicatorChips() {
  return (
    <div className="absolute top-0 left-0 flex h-[14px] border-b border-[#3a3a3a] bg-[#1c1c1c] text-[9px] leading-[13px] whitespace-nowrap text-[#cfcfcf]">
      <span className="flex w-[37px] items-center gap-1 border-r border-[#484848] pl-[2px]">
        <span className="flex h-2 w-2 shrink-0"><span className="w-1 bg-[#3ccc50]" /><span className="w-1 bg-[#e86060]" /></span>
        Price
      </span>
      <button aria-label="Price list" className="flex w-[15px] items-center justify-center border-r border-[#484848]"><List className="h-[10px] w-[10px]" strokeWidth={3} /></button>
      {INDICATORS.map(([name, width]) => (
        <label key={name} className={`flex items-center gap-[3px] border-r border-[#484848] pl-[2px] ${width}`}>
          <input type="checkbox" className="h-2 w-2 shrink-0 appearance-none border border-[#555] bg-black" />
          {name}
        </label>
      ))}
      <label className="flex w-[192px] items-center gap-[3px] border-r border-[#484848] pl-[3px]">
        <input type="checkbox" className="h-2 w-2 shrink-0 appearance-none bg-[#6c6c6c]" />
        20230902 MA simult cross v2 : Variables
      </label>
    </div>
  );
}

const SYSTEMS = [
  ["20230902 MA simult cross v2 (20 47 5 12)", "13,307", "text-[#b48250]", "w-[223px]"],
  ["MySystem(23) (5 0.03 6 50)", "20,394", "text-[#22b8e8]", "w-[157px]"],
  ["MySystem(1) (1 27 6 40 14 29 20 3 10 2 0 2 18)", "13,913", "text-[#5a8ef0]", "w-[241px]"],
];

function SystemRow() {
  return (
    <div className="flex h-[14px] shrink-0 bg-black text-[9px] leading-[14px] whitespace-nowrap text-[#cfcfcf]">
      <button aria-label="Systems" className="flex w-3 items-center justify-center border-r border-[#484848] bg-[#222] text-[#aaa]"><Copy className="h-[9px] w-[9px] -scale-x-100" strokeWidth={2.500} /></button>
      {SYSTEMS.map(([name, gain, color, width]) => (
        <span key={name} className={`flex justify-between border-r border-[#484848] bg-[#1c1c1c] px-[2px] ${width}`}>
          {name}<span className={color}>{gain}</span>
        </span>
      ))}
      <span className="ml-auto w-[63px] border-l border-[#555] bg-[#1e1e1e]" />
    </div>
  );
}

function BottomBar() {
  return (
    <footer className="flex h-5 shrink-0 items-center border-b border-[#484848] bg-black text-[9px] text-[#d0d0d0]">
      <button aria-label="Drawing tools" className="flex h-full w-[25px] items-center justify-center bg-[#44484c]">
        <svg viewBox="0 0 16 16" className="h-[15px] w-[15px]" fill="none">
          <path d="M1 3l3 9 3-7 2 6" stroke="#d03030" /><path d="M2 14h7" stroke="#20b020" /><path d="M9 12l5-9" stroke="#30c0f0" strokeWidth="2.600" />
        </svg>
      </button>
      <button aria-label="Share" className="flex w-5 items-center justify-center"><Share2 className="h-[14px] w-[14px]" fill="#ddd" strokeWidth={3} /></button>
      <button className="flex h-full w-[59px] items-center gap-[6px] bg-[#333639] pl-[3px] font-medium">
        <svg viewBox="0 0 14 14" className="h-[14px] w-[14px]" fill="none" strokeWidth="2.500">
          <path d="M6 1.500H2v11h4" stroke="#3c82d0" /><path d="M8 1.500h4v11H8" stroke="#888" />
        </svg>
        Analyze
      </button>
      <div className="flex items-center gap-[5px] pl-[3px]">
        <button aria-label="Chat"><svg viewBox="0 0 14 14" className="block h-[14px] w-[14px]"><path d="M1 1h6l2 2v6H1z" fill="#1c5c98" /><rect x="3" y="5" width="11" height="7" rx="1.500" fill="#38a8f0" /><path d="M5 8.500h7" stroke="#fff" strokeDasharray="1 1" /></svg></button>
        <button aria-label="Report"><svg viewBox="0 0 14 14" className="block h-[14px] w-[14px]"><path d="M3 1h9v12H3z" fill="#ddd" /><path d="M4 4h7M4 7h7M4 10h7" stroke="#333" /><path d="M4 5l4 6" stroke="#e03030" strokeWidth="2" /><path d="M8 3h4v3H8z" fill="#40a050" /></svg></button>
        <button aria-label="Order book"><svg viewBox="0 0 14 14" className="block h-[14px] w-[14px]"><path d="M2 1h6v12H2v-3h3V8H2V6h3V4H2z" fill="#28c848" /><path d="M8 1h3v2h2v3h-3v2h3v3h-2v2H8z" fill="#f05050" /></svg></button>
        <button aria-label="Windows" className="ml-[2px]"><svg viewBox="0 0 14 14" className="block h-[14px] w-[14px]" fill="#111" stroke="#ccc"><rect x="1" y="1" width="9" height="8" /><rect x="4" y="4.500" width="9.500" height="8.500" /><path d="M5.500 11l2-3 2 2 2.500-3" fill="none" stroke="#38a8f0" /></svg></button>
        <button aria-label="Collapse"><ChevronsLeft className="h-[11px] w-[11px]" /></button>
      </div>
      <div className="ml-px flex h-3 flex-1 border border-[#444] bg-black">
        <button aria-label="Scroll left" className="flex w-[11px] items-center justify-center border-r border-[#444] bg-[#1c1c1c]"><ChevronLeft className="h-[9px] w-[9px]" strokeWidth={3} /></button>
        <div className="ml-auto w-[188px] border-l border-[#555] bg-linear-to-b from-[#161616] to-[#303030]" />
        <button aria-label="Scroll right" className="flex w-3 items-center justify-center border-l border-[#555] bg-[#1c1c1c]"><ChevronRight className="h-[9px] w-[9px]" strokeWidth={3} /></button>
      </div>
      <div className="flex items-center gap-[6px] pr-[3px] pl-1">
        <button aria-label="Go to date"><svg viewBox="0 0 16 16" className="block h-[15px] w-[15px]"><path d="M4 2h12v10H4z" fill="#a8c0d8" /><path d="M4 4h12M7 1v3M12 1v3M6 7h9M6 9.500h9" stroke="#456" /><path d="M0 12l5-4v2h5v4H5v2z" fill="#30d040" /></svg></button>
        <button aria-label="Undo" className="text-[#1ea0f0]"><Undo2 className="h-[15px] w-[15px]" strokeWidth={3} /></button>
        <button aria-label="Redo" className="text-[#124a6a]"><Redo2 className="h-[15px] w-[15px]" strokeWidth={3} /></button>
        <button aria-label="Candles"><svg viewBox="0 0 16 16" className="block h-[15px] w-[15px]"><path d="M1 8h4v6H1z" fill="#f06060" /><path d="M11 1h4v12h-4z" fill="#30d040" /><path d="M4 13l3-4h4V4" fill="none" stroke="#eee" strokeWidth="1.600" /></svg></button>
        <button aria-label="Fit"><svg viewBox="0 0 16 16" className="block h-[15px] w-[15px]"><circle cx="7" cy="6" r="5" fill="#888" stroke="#bbb" /><path d="M10 10l4 5" stroke="#ccc" strokeWidth="2" /><path d="M14.500 1v8M1 14h7" stroke="#2ab4e6" strokeWidth="1.500" strokeDasharray="2 1" /></svg></button>
        <button aria-label="Zoom out"><svg viewBox="0 0 16 16" className="block h-[15px] w-[15px]"><circle cx="6" cy="6" r="5" fill="#111" stroke="#aaa" /><path d="M10 10l5 5" stroke="#ccc" strokeWidth="2" /><path d="M3.500 6h5" stroke="#2ab4e6" strokeWidth="2" /></svg></button>
        <button aria-label="Zoom in"><svg viewBox="0 0 16 16" className="block h-[15px] w-[15px]"><circle cx="6" cy="6" r="5" fill="#111" stroke="#aaa" /><path d="M10 10l5 5" stroke="#ccc" strokeWidth="2" /><path d="M3.500 6h5M6 3.500v5" stroke="#2ab4e6" strokeWidth="2" /></svg></button>
        <button aria-label="Keyboard"><svg viewBox="0 0 16 16" className="block h-[15px] w-[15px]"><path d="M0 2h16v6H0z" fill="#444" stroke="#bbb" /><path d="M2 4h12M2 6h12" stroke="#ccc" strokeDasharray="1 1" /><path d="M8 9v4M5.500 11.500L8 15l2.500-3.500z" fill="#2ab4e6" stroke="#2ab4e6" /></svg></button>
      </div>
    </footer>
  );
}

export default function App() {
  return (
    <div className="flex h-screen flex-col overflow-hidden bg-black font-['Inter','Noto_Sans',sans-serif]">
      <MenuBar />
      <Toolbar />
      <div className="flex min-h-0 flex-1">
        <Sidebar />
        <main className="flex min-w-0 flex-1 flex-col">
          <section aria-label="Price" className="relative min-h-0 flex-1">
            <PriceChart />
            <IndicatorChips />
          </section>
          <section aria-label="ATR" className="relative h-[27px] shrink-0">
            <AtrPanel />
            <span className="absolute top-[2px] left-0 flex h-3 items-center gap-1 border border-[#444] bg-[#1c1c1c] px-[2px] text-[9px] leading-3 text-[#cfcfcf]">
              <span className="flex h-2 w-2"><span className="w-1 bg-[#10b890]" /><span className="w-1 bg-[#f00030]" /></span>
              ATR (14)
            </span>
          </section>
          <section aria-label="Price Action RSI CCI" className="relative h-6 shrink-0">
            <RsiPanel />
            <span className="absolute top-px left-0 flex h-3 items-center gap-1 border border-[#444] bg-[#1c1c1c] px-[2px] text-[9px] leading-3 text-[#cfcfcf]">
              <span className="h-2 w-2 bg-[#c4c4c4]" />
              Price Action RSI CCI
            </span>
          </section>
          <SystemRow />
          <div className="h-[14px] shrink-0"><TimeAxis /></div>
        </main>
      </div>
      <BottomBar />
    </div>
  );
}
